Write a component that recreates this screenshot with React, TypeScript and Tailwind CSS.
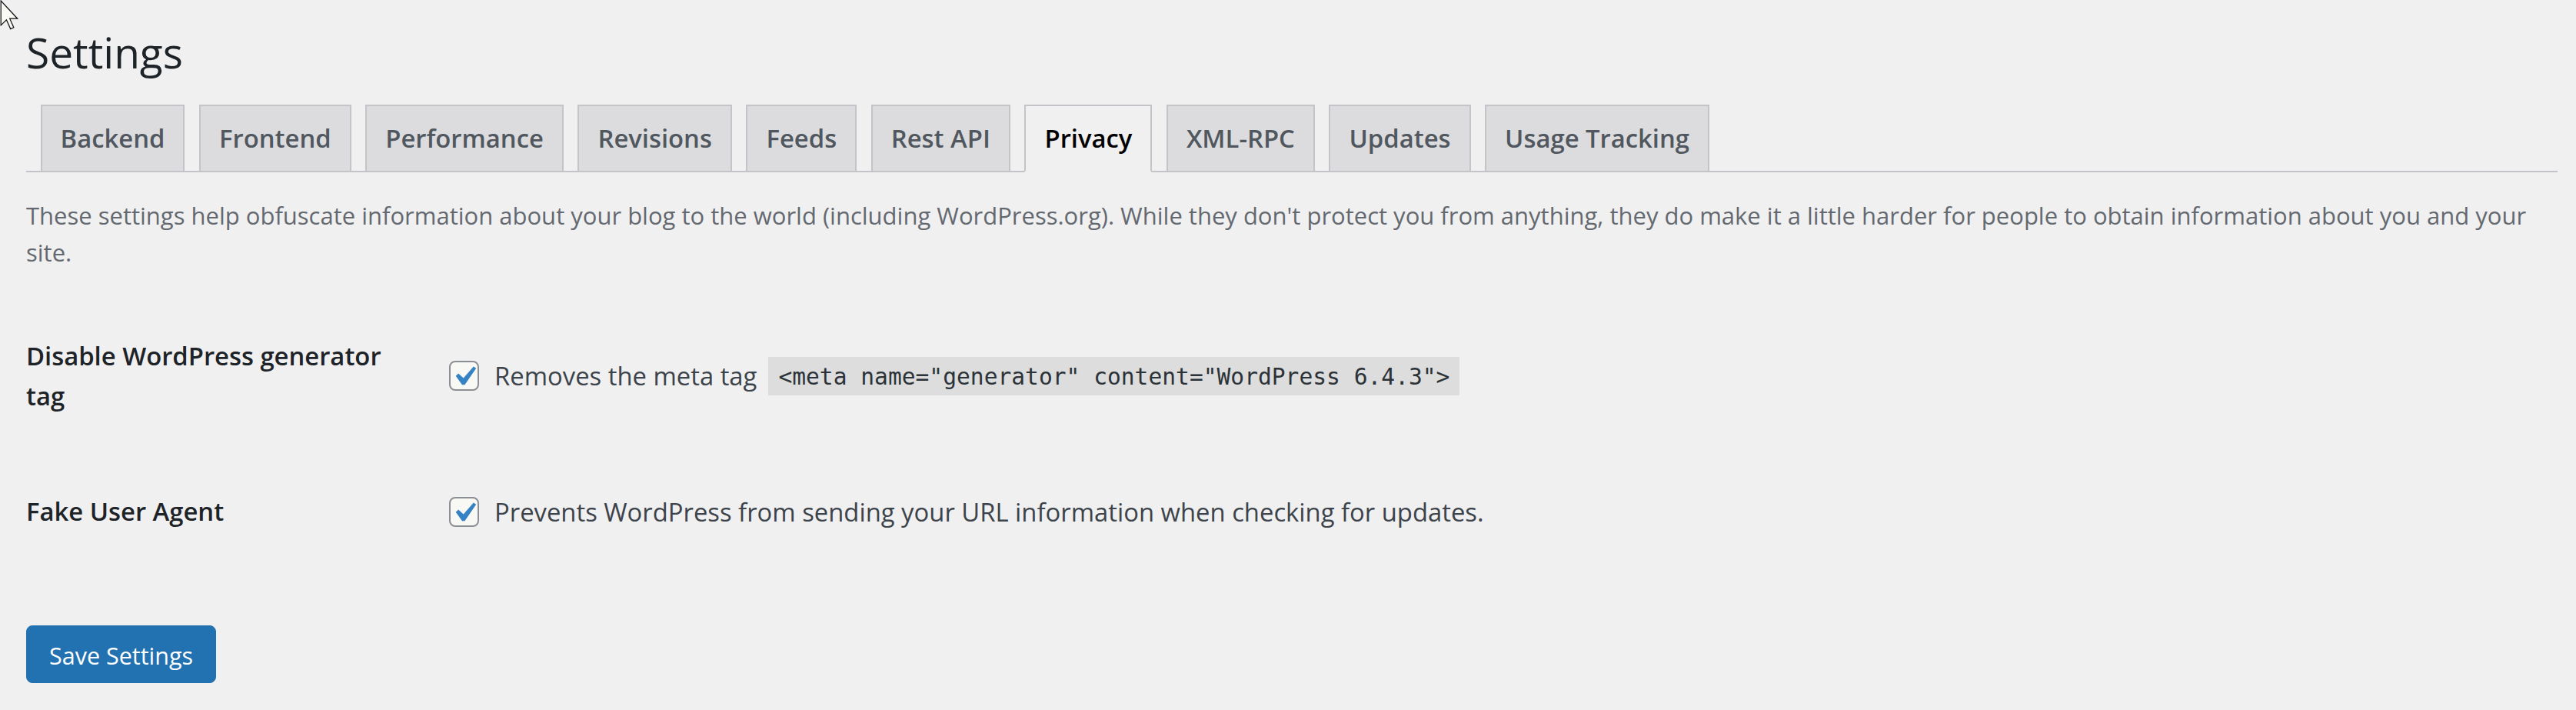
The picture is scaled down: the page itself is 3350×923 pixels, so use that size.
const tabs = [
  'Backend',
  'Frontend',
  'Performance',
  'Revisions',
  'Feeds',
  'Rest API',
  'Privacy',
  'XML-RPC',
  'Updates',
  'Usage Tracking',
];

// WordPress-style checkbox (checked)
function WpCheckbox() {
  return (
    <span className="relative inline-block w-[39px] h-[39px] shrink-0 rounded-[8px] border-2 border-[#8c8f94] bg-[#f8f8f5]">
      <svg
        viewBox="0 0 20 20"
        className="absolute -left-[8px] -top-[7px] w-[51px] h-[51px]"
      >
        <path
          d="M14.83 4.89l1.34.94-5.81 8.38H9.02L5.78 9.67l1.34-1.25 2.57 2.4z"
          fill="#3582c4"
        />
      </svg>
    </span>
  );
}

function Cursor() {
  return (
    <svg
      viewBox="0 0 12 19"
      className="absolute left-0 top-0 w-[25px] h-[39px]"
    >
      <path
        d="M0.5 0.5 L0.5 16 L4 12.6 L6.6 18.3 L8.6 17.4 L6.1 11.8 L11 11.8 Z"
        fill="#fafaf5"
        stroke="#111"
        strokeWidth="0.6"
        strokeLinejoin="miter"
      />
    </svg>
  );
}

export default function App() {
  return (
    <div className="relative min-h-[923px] w-full bg-[#f0f0f1] font-['Open_Sans',sans-serif] overflow-hidden">
      <Cursor />

      <div className="flex flex-col pl-[34px] pr-[24px]">
        {/* Page title */}
        <h1 className="mt-[33px] text-[55px] leading-[70px] text-[#1d2327] font-normal">
          Settings
        </h1>

        {/* Tabs */}
        <nav className="mt-[33px] flex items-end border-b-2 border-[#c3c4c7]">
          {tabs.map((t) => {
            const active = t === 'Privacy';
            return (
              <a
                key={t}
                className={
                  active
                    ? 'ml-[18.6px] -mb-[2px] border-2 border-[#c3c4c7] border-b-[#f0f0f1] bg-[#f0f0f1] px-[24px] text-[32.8px] leading-[84px] font-semibold text-black'
                    : 'ml-[18.6px] -mb-[2px] border-2 border-[#c3c4c7] bg-[#dcdcde] px-[24px] text-[32.8px] leading-[84px] font-semibold text-[#50575e]'
                }
              >
                {t}
              </a>
            );
          })}
        </nav>

        {/* Intro */}
        <p className="mt-[32px] text-[31px] leading-[48.3px] text-[#646970]">
          These settings help obfuscate information about your blog to the world (including
          WordPress.org). While they don't protect you from anything, they do make it a little
          harder for people to obtain information about you and your site.
        </p>

        {/* Form table */}
        <div className="mt-[32px] flex flex-col">
          <div className="flex items-start pb-[52px]">
            <div className="w-[550px] shrink-0 pt-[52px]">
              <div className="w-[505px] text-[32.8px] leading-[52px] font-semibold text-[#1d2327]">
                Disable WordPress generator tag
              </div>
            </div>
            <div className="pt-[79px] flex items-center h-[50px] box-content">
              <WpCheckbox />
              <span className="ml-[20px] text-[32.8px] text-[#3c434a] whitespace-nowrap">
                Removes the meta tag
              </span>
              <code className="ml-[15px] h-[50px] pt-[3px] leading-[47px] px-[13px] bg-[#dddddd] text-[29.6px] text-[#2c3338] font-['DejaVu_Sans_Mono',monospace] whitespace-pre">
                {'<meta name="generator" content="WordPress 6.4.3">'}
              </code>
            </div>
          </div>

          <div className="flex items-start">
            <div className="w-[550px] shrink-0 pt-[46.6px]">
              <div className="text-[32.8px] leading-[52px] font-semibold text-[#1d2327]">
                Fake User Agent
              </div>
            </div>
            <div className="pt-[48px] flex items-center h-[50px] box-content">
              <WpCheckbox />
              <span className="ml-[20px] text-[32.8px] text-[#3c434a] whitespace-nowrap">
                Prevents WordPress from sending your URL information when checking for updates.
              </span>
            </div>
          </div>
        </div>

        {/* Submit */}
        <div className="mt-[122px]">
          <button className="h-[75px] px-[29px] pt-[3px] rounded-[8px] bg-[#2271b1] border border-[#2271b1] text-white text-[30.5px] leading-none">
            Save Settings
          </button>
        </div>
      </div>
    </div>
  );
}
